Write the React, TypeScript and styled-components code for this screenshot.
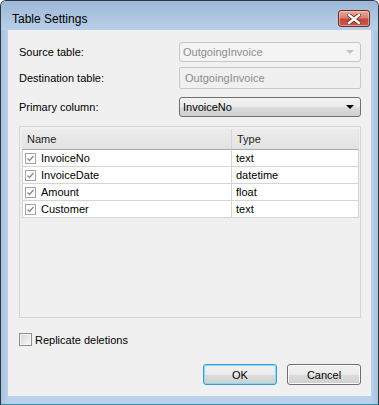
import { Fragment } from "react";
import styled, { createGlobalStyle } from "styled-components";

const GlobalStyle = createGlobalStyle`
  html, body {
    margin: 0;
    padding: 0;
    background: #ffffff;
  }
  * {
    box-sizing: border-box;
  }
`;

const Window = styled.div`
  width: 379px;
  height: 405px;
  display: flex;
  flex-direction: column;
  border: 1px solid #2f3740;
  border-bottom-color: #3a86aa;
  border-radius: 6px 6px 0 0;
  background: linear-gradient(90deg, #a9c3e0 0px, #bad1ea 7px, #bad1ea 370px, #a9c3df 100%);
  font-family: "Liberation Sans", Arial, sans-serif;
  overflow: hidden;
`;

const TitleBar = styled.div`
  height: 29px;
  display: flex;
  align-items: flex-start;
  justify-content: space-between;
  padding: 0 8px 0 11px;
  background: linear-gradient(180deg, #9db7d5 0%, #abc4e0 50%, #b9d0ea 100%);
`;

const Title = styled.span`
  font-size: 12px;
  line-height: 15px;
  margin-top: 11px;
  color: #000;
`;

const CloseButton = styled.button`
  width: 32px;
  height: 17px;
  margin-top: 9px;
  padding: 0;
  display: flex;
  align-items: center;
  justify-content: center;
  border: 1px solid #6e2e28;
  border-radius: 3px;
  background: linear-gradient(180deg, #e9a99a 0%, #d8806f 45%, #c2473a 55%, #c9574a 100%);
  box-shadow: inset 0 0 0 1px rgba(255, 220, 210, 0.5);
`;

const Frame = styled.div`
  flex: 1;
  display: flex;
  padding: 0 7px 8px 7px;
`;

const Content = styled.div`
  flex: 1;
  display: flex;
  flex-direction: column;
  background: #f0f0f0;
  padding: 12px 10px 11px 11px;
`;

const FieldRow = styled.div<{ $gap: number }>`
  display: flex;
  align-items: center;
  margin-bottom: ${(p) => p.$gap}px;
`;

const Label = styled.span`
  width: 160px;
  font-size: 11px;
  color: #000;
`;

const ComboBox = styled.div<{ $disabled?: boolean }>`
  flex: 1;
  height: 20px;
  display: flex;
  align-items: center;
  justify-content: space-between;
  padding: 0 6px 0 3px;
  font-size: 11px;
  border-radius: 3px;
  border: 1px solid ${(p) => (p.$disabled ? "#c6c6c6" : "#707070")};
  color: ${(p) => (p.$disabled ? "#8d8d8d" : "#000")};
  background: ${(p) =>
    p.$disabled
      ? "#f4f4f4"
      : "linear-gradient(180deg, #f3f3f3 0%, #ebebeb 50%, #dddddd 51%, #cfcfcf 100%)"};
`;

const Arrow = styled.span<{ $disabled?: boolean }>`
  width: 0;
  height: 0;
  border-left: 4px solid transparent;
  border-right: 4px solid transparent;
  border-top: 4px solid ${(p) => (p.$disabled ? "#c3c3c3" : "#000")};
`;

const TextBox = styled.div`
  flex: 1;
  height: 22px;
  display: flex;
  align-items: center;
  padding: 0 5px;
  font-size: 11px;
  color: #8d8d8d;
  border: 1px solid #c9c9c9;
  border-radius: 2px;
  background: #f0f0f0;
`;

const GridBox = styled.div`
  height: 192px;
  border: 1px solid #d5d5d5;
  padding: 2px 1px 2px 2px;
  background: #f0f0f0;
`;

const Table = styled.div`
  display: grid;
  grid-template-columns: 210px 1fr;
  font-size: 11px;
`;

const HeaderCell = styled.div<{ $first?: boolean }>`
  height: 21px;
  display: flex;
  align-items: center;
  padding-left: 5px;
  color: #1e1e1e;
  background: linear-gradient(180deg, #ececec 0%, #e3e3e3 100%);
  border-bottom: 1px solid #a9a9a9;
  border-right: 1px solid ${(p) => (p.$first ? "#d4d4d4" : "#e3e3e3")};
`;

const Cell = styled.div<{ $first?: boolean }>`
  height: 17px;
  display: flex;
  align-items: center;
  gap: 5px;
  padding-left: ${(p) => (p.$first ? 2 : 4)}px;
  background: #fff;
  color: #000;
  border-bottom: 1px solid #d4d4d4;
  border-right: 1px solid #d4d4d4;
  border-left: ${(p) => (p.$first ? "1px solid #d4d4d4" : "none")};
`;

const GridCheck = styled.span`
  width: 11px;
  height: 11px;
  display: flex;
  align-items: center;
  justify-content: center;
  border: 1px solid #a3a3a3;
  background: #fff;
`;

const CheckRow = styled.label`
  display: flex;
  align-items: center;
  gap: 3px;
  margin-top: 15px;
  height: 13px;
  font-size: 11px;
  color: #000;
`;

const CheckBox = styled.span`
  width: 13px;
  height: 13px;
  border: 1px solid #8e8f8f;
  background: linear-gradient(135deg, #d6d6d6 0%, #ebebeb 60%, #f8f8f8 100%);
  box-shadow: inset 0 0 0 1px #f4f4f4;
`;

const ButtonRow = styled.div`
  display: flex;
  justify-content: flex-end;
  gap: 10px;
  margin-top: 18px;
`;

const Button = styled.button<{ $default?: boolean }>`
  width: 74px;
  height: 21px;
  padding: 0;
  font-family: "Liberation Sans", Arial, sans-serif;
  font-size: 11px;
  color: #000;
  border-radius: 3px;
  border: 1px solid ${(p) => (p.$default ? "#3c9ad6" : "#707070")};
  box-shadow: inset 0 0 0 1px ${(p) => (p.$default ? "#7fdcf8" : "#fbfbfb")};
  background: linear-gradient(180deg, #f2f2f2 0%, #ebebeb 50%, #dddddd 51%, #cfcfcf 100%);
`;

const rows = [
  { name: "InvoiceNo", type: "text" },
  { name: "InvoiceDate", type: "datetime" },
  { name: "Amount", type: "float" },
  { name: "Customer", type: "text" },
];

function CheckMark() {
  return (
    <svg width="9" height="9" viewBox="0 0 9 9">
      <path d="M1.5 4.5 L3.5 6.5 L7.5 2" fill="none" stroke="#8a8a8a" strokeWidth="1.3" />
    </svg>
  );
}

function CloseIcon() {
  return (
    <svg width="14" height="10" viewBox="0 0 14 10">
      <path d="M2 1 L12 9 M12 1 L2 9" stroke="#5a2a26" strokeWidth="4" strokeLinecap="square" />
      <path d="M2 1 L12 9 M12 1 L2 9" stroke="#ffffff" strokeWidth="2.4" strokeLinecap="square" />
    </svg>
  );
}

export default function App() {
  return (
    <>
      <GlobalStyle />
      <Window>
        <TitleBar>
          <Title>Table Settings</Title>
          <CloseButton aria-label="Close">
            <CloseIcon />
          </CloseButton>
        </TitleBar>
        <Frame>
          <Content>
            <FieldRow $gap={5}>
              <Label>Source table:</Label>
              <ComboBox $disabled>
                <span>OutgoingInvoice</span>
                <Arrow $disabled />
              </ComboBox>
            </FieldRow>
            <FieldRow $gap={8}>
              <Label>Destination table:</Label>
              <TextBox>OutgoingInvoice</TextBox>
            </FieldRow>
            <FieldRow $gap={9}>
              <Label>Primary column:</Label>
              <ComboBox>
                <span>InvoiceNo</span>
                <Arrow />
              </ComboBox>
            </FieldRow>

            <GridBox>
              <Table>
                <HeaderCell $first>Name</HeaderCell>
                <HeaderCell>Type</HeaderCell>
                {rows.map((r) => (
                  <Fragment key={r.name}>
                    <Cell $first>
                      <GridCheck>
                        <CheckMark />
                      </GridCheck>
                      {r.name}
                    </Cell>
                    <Cell>{r.type}</Cell>
                  </Fragment>
                ))}
              </Table>
            </GridBox>

            <CheckRow>
              <CheckBox />
              Replicate deletions
            </CheckRow>

            <ButtonRow>
              <Button $default>OK</Button>
              <Button>Cancel</Button>
            </ButtonRow>
          </Content>
        </Frame>
      </Window>
    </>
  );
}
